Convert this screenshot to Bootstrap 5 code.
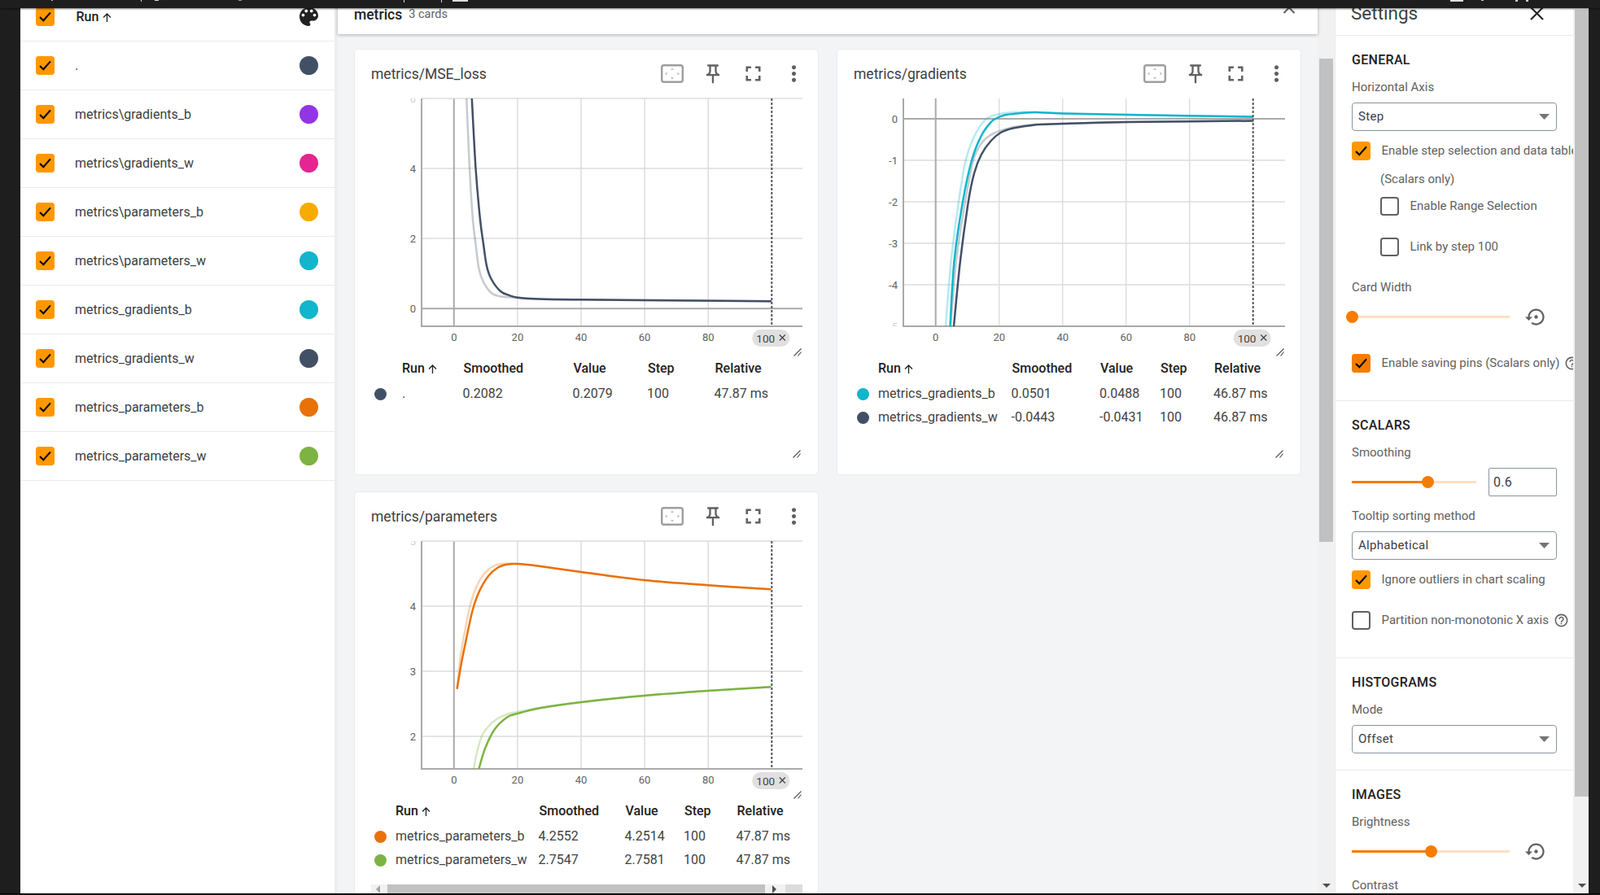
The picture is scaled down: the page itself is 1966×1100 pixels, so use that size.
<!DOCTYPE html>
<html lang="en">
<head>
  <meta charset="UTF-8" />
  <meta name="viewport" content="width=device-width, initial-scale=1.0"/>
  <title>TensorBoard Scalars</title>
  <link href="https://cdn.jsdelivr.net/npm/bootstrap@5.3.0/dist/css/bootstrap.min.css" rel="stylesheet">
  <style>
    html, body { width: 1966px; height: 1100px; overflow: hidden; }
    body { background: #1e1e1e; font-family: Roboto, "Liberation Sans", sans-serif; font-size: 15px; color: #212121; }

    /* window frame */
    .app-wrap { width: 1966px; height: 1099px; overflow: hidden; position: relative; padding: 0 14px 0 25px; }
    .top-strip { position: absolute; left: 0; top: 0; width: 1966px; height: 10px; background: #1e1e1e; box-shadow: 0 1px 2px rgba(0,0,0,.55); z-index: 20; }
    .top-strip svg { display: block; }

    /* run list */
    .runs-pane { width: 386px; flex: none; background: #fff; margin-top: -9px; }
    .run-row { height: 60px; padding: 0 20px 0 19px; border-bottom: 1px solid #ebebeb; }
    .run-row .run-name { margin-left: 25.500px; flex: 1; color: #3c4043; font-size: 16px; }
    .run-row.run-head .run-name { font-weight: 500; color: #212121; margin-left: 27px; }
    .run-row.run-head .up-arrow { margin-left: 5px; }
    .run-dot { width: 23px; height: 23px; border-radius: 50%; flex: none; }
    .pane-gap { width: 4px; flex: none; background: #eee; }
    .up-arrow { fill: none; stroke: currentColor; stroke-width: 1.300; margin-left: 4px; vertical-align: -1px; }

    /* checkboxes */
    .tick { width: 22.5px; height: 22.5px; margin: 0; flex: none; border-radius: 3px; border: 2px solid #616161; background-color: #fff; }
    .form-check-input.tick:checked[type=checkbox] { background-color: #ff9800; border-color: #ff9800; --bs-form-check-bg-image: url("data:image/svg+xml,%3csvg xmlns='http://www.w3.org/2000/svg' viewBox='0 0 22 22'%3e%3cpath fill='none' stroke='%23000' stroke-width='2.400' d='M3.500 11.500l5 5L18.500 5'/%3e%3c/svg%3e"); background-size: 100%; }
    .form-check-input.tick.tick-deep:checked[type=checkbox] { background-color: #f57c00; border-color: #f57c00; }

    /* main column */
    .main-pane { width: 1204px; flex: none; background: #f3f4f6; }
    .group-head { height: 42px; background: #fff; box-shadow: 0 1px 4px rgba(0,0,0,.28); padding: 0 0 6px 20px; position: relative; z-index: 2; }
    .group-head b { font-weight: 500; font-size: 17.5px; }
    .group-head span { font-size: 14.5px; color: #616161; margin-left: 8px; }
    .group-head svg { margin-left: auto; margin-right: 27px; margin-top: -12px; }
    .card-grid { display: grid; grid-template-columns: 571px 571px; gap: 20px 22px; padding: 18px 0 0 20px; }
    .chart-card { height: 524px; border: 1px solid #ebebeb; border-radius: 5px; overflow: hidden; }
    .chart-top { height: 54px; padding: 5px 0 0 20px; }
    .chart-top h6 { margin: 2px 0 0; font-size: 17.500px; font-weight: 400; color: #3c4043; flex: 1; }
    .chart-top .tool { display: block; color: #616161; fill: currentColor; flex: none; }
    .tool.t-fit { margin-right: 22px; }
    .tool.t-pin { margin-right: 19.500px; }
    .tool.t-full { margin-right: 19px; }
    .tool.t-more { margin-right: 14.500px; }
    .chart-body { padding-left: 20px; }
    .chart-svg { display: block; overflow: visible; font-family: Roboto, sans-serif; }
    .grab-mark { position: absolute; right: 21px; bottom: 20px; }

    .val-table { table-layout: fixed; width: 530px; margin: 0; --bs-table-bg: transparent; font-size: 16px; color: #424242; }
    .val-table th, .val-table td { padding: 0; border: 0; white-space: nowrap; vertical-align: middle; }
    .val-table th { height: 32.5px; font-weight: 500; color: #212121; font-size: 16px; }
    .val-table th + th + th { padding-left: 1px; }
    .val-table td { height: 29px; color: #424242; }
    .tbl-dot { display: block; width: 15px; height: 15px; border-radius: 50%; }

    .h-scroll { width: 530px; height: 13px; margin-top: 15px; background: #f1f1f1; }
    .h-scroll .h-thumb { width: 464px; height: 12px; margin-left: 21px; background: #c1c1c1; }
    .h-scroll .h-corner { width: 21px; height: 13px; background: #dcdcdc; margin-left: auto; }
    .h-scroll .h-arrow-l { width: 0; height: 0; margin-left: 6px; margin-right: -12px; border: 5px solid transparent; border-right-color: #a3a3a3; border-left: 0; }
    .h-scroll .h-arrow-r { width: 0; height: 0; margin-left: 9px; border: 5px solid transparent; border-left-color: #505050; border-right: 0; }

    /* fake scrollbars */
    .v-scroll { flex: none; background: #f1f1f1; }
    .v-scroll.main-bar { width: 21px; padding: 0 2px; }
    .v-scroll.main-bar .v-thumb { margin-top: 72px; height: 594px; background: #c1c1c1; }
    .v-scroll.side-bar { width: 19px; padding-left: 2px; }
    .v-scroll.side-bar .v-thumb { margin-top: 12px; height: 967px; background: #c1c1c1; }
    .v-arrow { margin: auto auto 8px; width: 0; height: 0; border: 5px solid transparent; border-top-color: #505050; border-bottom: 0; }

    /* settings */
    .settings-pane { width: 293px; flex: none; background: #fff; border-left: 1px solid #ebebeb; border-right: 0; overflow: hidden; white-space: nowrap; }
    .settings-top { height: 44px; padding: 0 36px 10px 19px; border-bottom: 1px solid #ebebeb; font-size: 22.5px; color: #3c4043; }
    .set-block { padding: 20px 0 34px 20px; border-bottom: 1px solid #ebebeb; }
    .set-block.tight-end { padding-bottom: 20px; }
    .set-block.last-one { border-bottom: 0; padding-bottom: 0; }
    .set-head { height: 20px; line-height: 20px; font-weight: 500; font-size: 16px; letter-spacing: .3px; color: #212121; }
    .set-lbl { height: 20px; line-height: 20px; margin-top: 13px; color: #616161; font-size: 15px; }
    .set-lbl.lbl-next { margin-top: 14px; }
    .set-lbl.lbl-far { margin-top: 28px; }
    .set-lbl.lbl-end { margin-top: 19px; }
    .set-select { width: 252px; height: 35px; margin-top: 9px; padding: 0 24px 0 7px; font-size: 15px; letter-spacing: .3px; color: #3c4043; border: 1px solid #8a94a0; border-radius: 4px; background-size: 13px 7px; background-position: right 8px center; box-shadow: none;
      --bs-form-select-bg-img: url("data:image/svg+xml,%3csvg xmlns='http://www.w3.org/2000/svg' viewBox='0 0 13 7'%3e%3cpath fill='%23757575' d='M0 0h13L6.500 7z'/%3e%3c/svg%3e"); }
    .set-check { height: 23px; margin-top: 13px; color: #616161; }
    .set-check.row-far { margin-top: 27px; }
    .set-check.row-farther { margin-top: 33px; }
    .set-check label { margin-left: 14px; }
    .set-note { height: 20px; line-height: 20px; margin-top: 13px; margin-left: 35px; color: #616161; }
    .set-sub { margin-left: 35px; }
    .set-sub.first-sub { margin-top: 12px; }
    .help-mark { flex: none; margin-left: 6px; fill: #616161; }

    .slide-wrap { height: 26px; margin-top: 13px; }
    .slide-wrap.slim { height: 35px; margin-top: 9px; }
    .slide-rail { position: relative; height: 3px; background: #ffdfc2; flex: none; }
    .slide-fill { height: 3px; background: #f57c00; }
    .slide-knob { position: absolute; top: -6px; width: 15px; height: 15px; margin-left: -7.5px; border-radius: 50%; background: #f57c00; }
    .reset-mark { fill: #616161; margin-left: 19px; flex: none; }
    .set-num { width: 84px; height: 35px; margin-left: 15px; padding: 0 5px; border: 1px solid #8a94a0; border-radius: 2px; font-size: 16px; letter-spacing: .3px; color: #3c4043; box-shadow: none; }

    .edge-line { position: absolute; left: 0; right: 0; bottom: 0; height: 1px; background: #000; }
  </style>
</head>
<body>
  <svg width="0" height="0" class="position-absolute">
    <symbol id="i-fit" viewBox="0 0 28 23">
      <rect x="1.200" y="1.200" width="25.600" height="20.600" rx="2.500" fill="#fff" stroke="#9e9e9e" stroke-width="2.400"/>
      <path fill="#bdbdbd" d="M14 4.500l2 2.500h-4zM14 18.500l2-2.500h-4zM5 11.500l2.500-2v4zM23 11.500l-2.500-2v4z"/>
    </symbol>
    <symbol id="i-pin" viewBox="0 0 24 24">
      <path d="M14 4v5c0 1.120.37 2.160 1 3H9c.65-.86 1-1.900 1-3V4h4m3-2H7c-.55 0-1 .45-1 1s.45 1 1 1h1v5c0 1.660-1.340 3-3 3v2h5.970v7l1 1 1-1v-7H19v-2c-1.660 0-3-1.340-3-3V4h1c.55 0 1-.45 1-1s-.45-1-1-1z"/>
    </symbol>
    <symbol id="i-full" viewBox="0 0 24 24">
      <path d="M7 14H5v5h5v-2H7v-3zm-2-4h2V7h3V5H5v5zm12 7h-3v2h5v-5h-2v3zM14 5v2h3v3h2V5h-5z"/>
    </symbol>
    <symbol id="i-more" viewBox="0 0 24 24">
      <path d="M12 8c1.100 0 2-.9 2-2s-.9-2-2-2-2 .9-2 2 .9 2 2 2zm0 2c-1.100 0-2 .9-2 2s.9 2 2 2 2-.9 2-2-.9-2-2-2zm0 6c-1.100 0-2 .9-2 2s.9 2 2 2 2-.9 2-2-.9-2-2-2z"/>
    </symbol>
    <symbol id="i-help" viewBox="0 0 24 24">
      <path d="M11 18h2v-2h-2v2zm1-16C6.480 2 2 6.480 2 12s4.480 10 10 10 10-4.480 10-10S17.520 2 12 2zm0 18c-4.410 0-8-3.590-8-8s3.590-8 8-8 8 3.590 8 8-3.590 8-8 8zm0-14c-2.210 0-4 1.790-4 4h2c0-1.100.9-2 2-2s2 .9 2 2c0 2-3 1.750-3 5h2c0-2.250 3-2.500 3-5 0-2.210-1.790-4-4-4z"/>
    </symbol>
    <symbol id="i-reset" viewBox="0 0 24 24">
      <path d="M14 12c0-1.100-.9-2-2-2s-2 .9-2 2 .9 2 2 2 2-.9 2-2zm-2-9c-4.970 0-9 4.030-9 9H0l4 4 4-4H5c0-3.870 3.130-7 7-7s7 3.130 7 7-3.130 7-7 7c-1.510 0-2.910-.49-4.060-1.300l-1.420 1.440C8.040 20.300 9.940 21 12 21c4.970 0 9-4.030 9-9s-4.030-9-9-9z"/>
    </symbol>
    <symbol id="i-grab" viewBox="0 0 10 10">
      <path fill="none" stroke="#555" stroke-width="1.200" d="M.5 9.500l9-9M5.500 9.500l4-5"/>
    </symbol>
    <symbol id="i-up" viewBox="0 0 11 11">
      <path d="M5.500 11V1M1 5.500L5.500 1 10 5.500"/>
    </symbol>
  </svg>

  <div class="app-wrap d-flex">
    <!-- Top window strip -->
    <div class="top-strip">
      <svg width="1966" height="3">
        <rect x="63" y="0" width="2" height="1" fill="#bbb"/>
        <rect x="173" y="0" width="1" height="2" fill="#ddd"/>
        <rect x="190" y="0" width="5" height="1" fill="#ddd"/>
        <rect x="293" y="0" width="4" height="1" fill="#999"/>
        <rect x="496" y="0" width="1" height="3" fill="#ddd"/>
        <rect x="542" y="0" width="1" height="3" fill="#ddd"/>
        <rect x="556" y="0" width="19" height="2" fill="#ddd"/>
        <rect x="1782" y="0" width="16" height="2" fill="#ddd"/>
        <rect x="1820" y="0" width="3" height="1" fill="#ccc"/>
        <rect x="1862" y="0" width="3" height="2" fill="#ccc"/>
        <rect x="1875" y="0" width="3" height="2" fill="#ccc"/>
      </svg>
    </div>

    <!-- Runs table -->
    <div class="runs-pane">
      <div class="run-row run-head d-flex align-items-center">
        <input class="form-check-input tick" type="checkbox" checked>
        <span class="run-name">Run<svg class="up-arrow" width="11" height="11"><use href="#i-up"/></svg></span>
        <svg width="23" height="23" viewBox="3 3 18 18"><path fill="#212121" d="M12 3c-4.970 0-9 4.030-9 9s4.030 9 9 9c.83 0 1.500-.67 1.500-1.500 0-.39-.15-.74-.39-1.010-.23-.26-.38-.61-.38-.99 0-.83.67-1.500 1.500-1.500H16c2.760 0 5-2.240 5-5 0-4.420-4.030-8-9-8zm-5.500 9c-.83 0-1.500-.67-1.500-1.500S5.670 9 6.500 9 8 9.670 8 10.500 7.330 12 6.500 12zm3-4C8.670 8 8 7.330 8 6.500S8.670 5 9.500 5s1.500.67 1.500 1.500S10.330 8 9.500 8zm5 0c-.83 0-1.500-.67-1.500-1.500S13.670 5 14.500 5s1.500.67 1.500 1.500S15.330 8 14.500 8zm3 4c-.83 0-1.500-.67-1.500-1.500S16.670 9 17.500 9s1.500.67 1.500 1.500-.67 1.500-1.500 1.500z"/></svg>
      </div>
      <div id="runRows"></div>
    </div>
    <div class="pane-gap"></div>

    <!-- Cards -->
    <div class="main-pane">
      <div class="group-head d-flex align-items-center">
        <b>metrics</b><span>3 cards</span>
        <svg width="16" height="10" viewBox="0 0 16 10"><path fill="none" stroke="#616161" stroke-width="2" d="M1.500 9L8 2.500 14.500 9"/></svg>
      </div>
      <div class="card-grid">
        <div class="card chart-card position-relative">
          <div class="chart-top d-flex align-items-center">
            <h6>metrics/MSE_loss</h6>
            <svg class="tool t-fit" width="28" height="23"><use href="#i-fit"/></svg>
            <svg class="tool t-pin" width="28" height="28"><use href="#i-pin"/></svg>
            <svg class="tool t-full" width="31" height="31"><use href="#i-full"/></svg>
            <svg class="tool t-more" width="31" height="31"><use href="#i-more"/></svg>
          </div>
          <div class="chart-body">
            <svg class="chart-svg" id="chartLoss" width="530" height="322"></svg>
            <table class="table val-table">
              <colgroup><col style="width:38px"><col style="width:74.500px"><col style="width:135px"><col style="width:91.500px"><col style="width:82.500px"><col></colgroup>
              <tr><th></th><th>Run<svg class="up-arrow" width="11" height="11"><use href="#i-up"/></svg></th><th>Smoothed</th><th>Value</th><th>Step</th><th>Relative</th></tr>
              <tr><td><i class="tbl-dot ms-1" style="background:#425066"></i></td><td>.</td><td>0.2082</td><td>0.2079</td><td>100</td><td>47.87 ms</td></tr>
            </table>
          </div>
          <svg class="grab-mark" width="10" height="10"><use href="#i-grab"/></svg>
        </div>

        <div class="card chart-card position-relative">
          <div class="chart-top d-flex align-items-center">
            <h6>metrics/gradients</h6>
            <svg class="tool t-fit" width="28" height="23"><use href="#i-fit"/></svg>
            <svg class="tool t-pin" width="28" height="28"><use href="#i-pin"/></svg>
            <svg class="tool t-full" width="31" height="31"><use href="#i-full"/></svg>
            <svg class="tool t-more" width="31" height="31"><use href="#i-more"/></svg>
          </div>
          <div class="chart-body">
            <svg class="chart-svg" id="chartGrad" width="530" height="322"></svg>
            <table class="table val-table">
              <colgroup><col style="width:30px"><col style="width:163.600px"><col style="width:108.400px"><col style="width:74px"><col style="width:66px"><col></colgroup>
              <tr><th></th><th>Run<svg class="up-arrow" width="11" height="11"><use href="#i-up"/></svg></th><th>Smoothed</th><th>Value</th><th>Step</th><th>Relative</th></tr>
              <tr><td><i class="tbl-dot ms-1" style="background:#12b5cb"></i></td><td>metrics_gradients_b</td><td>0.0501</td><td>0.0488</td><td>100</td><td>46.87 ms</td></tr>
              <tr><td><i class="tbl-dot ms-1" style="background:#425066"></i></td><td>metrics_gradients_w</td><td>-0.0443</td><td>-0.0431</td><td>100</td><td>46.87 ms</td></tr>
            </table>
          </div>
          <svg class="grab-mark" width="10" height="10"><use href="#i-grab"/></svg>
        </div>

        <div class="card chart-card position-relative">
          <div class="chart-top d-flex align-items-center">
            <h6>metrics/parameters</h6>
            <svg class="tool t-fit" width="28" height="23"><use href="#i-fit"/></svg>
            <svg class="tool t-pin" width="28" height="28"><use href="#i-pin"/></svg>
            <svg class="tool t-full" width="31" height="31"><use href="#i-full"/></svg>
            <svg class="tool t-more" width="31" height="31"><use href="#i-more"/></svg>
          </div>
          <div class="chart-body">
            <svg class="chart-svg" id="chartParams" width="530" height="322"></svg>
            <table class="table val-table">
              <colgroup><col style="width:30px"><col style="width:175.500px"><col style="width:106px"><col style="width:72.500px"><col style="width:64.500px"><col></colgroup>
              <tr><th></th><th>Run<svg class="up-arrow" width="11" height="11"><use href="#i-up"/></svg></th><th>Smoothed</th><th>Value</th><th>Step</th><th>Relative</th></tr>
              <tr><td><i class="tbl-dot ms-1" style="background:#e8710a"></i></td><td>metrics_parameters_b</td><td>4.2552</td><td>4.2514</td><td>100</td><td>47.87 ms</td></tr>
              <tr><td><i class="tbl-dot ms-1" style="background:#7cb342"></i></td><td>metrics_parameters_w</td><td>2.7547</td><td>2.7581</td><td>100</td><td>47.87 ms</td></tr>
            </table>
            <div class="h-scroll d-flex align-items-center">
              <div class="h-arrow-l"></div>
              <div class="h-thumb"></div>
              <div class="h-arrow-r"></div>
              <div class="h-corner"></div>
            </div>
          </div>
        </div>
      </div>
    </div>

    <div class="v-scroll main-bar d-flex flex-column">
      <div class="v-thumb"></div>
      <div class="v-arrow"></div>
    </div>

    <!-- Settings -->
    <div class="settings-pane">
      <div class="settings-top d-flex align-items-center justify-content-between">
        <span>Settings</span>
        <svg width="17" height="17" viewBox="0 0 17 17"><path fill="none" stroke="#212121" stroke-width="2" d="M1 1l15 15M16 1L1 16"/></svg>
      </div>

      <div class="set-block">
        <div class="set-head">GENERAL</div>
        <div class="set-lbl">Horizontal Axis</div>
        <select class="form-select set-select"><option>Step</option></select>
        <div class="set-check d-flex align-items-center">
          <input class="form-check-input tick" type="checkbox" checked>
          <label>Enable step selection and data table</label>
        </div>
        <div class="set-note">(Scalars only)</div>
        <div class="set-check set-sub first-sub d-flex align-items-center">
          <input class="form-check-input tick" type="checkbox">
          <label>Enable Range Selection</label>
        </div>
        <div class="set-check set-sub row-far d-flex align-items-center">
          <input class="form-check-input tick" type="checkbox">
          <label>Link by step 100</label>
        </div>
        <div class="set-lbl lbl-far">Card Width</div>
        <div class="slide-wrap d-flex align-items-center">
          <div class="slide-rail" style="width:194px"><div class="slide-knob" style="left:0"></div></div>
          <svg class="reset-mark" width="27" height="27"><use href="#i-reset"/></svg>
        </div>
        <div class="set-check row-farther d-flex align-items-center">
          <input class="form-check-input tick tick-deep" type="checkbox" checked>
          <label>Enable saving pins (Scalars only)</label>
          <svg class="help-mark" width="19" height="19"><use href="#i-help"/></svg>
        </div>
      </div>

      <div class="set-block">
        <div class="set-head">SCALARS</div>
        <div class="set-lbl">Smoothing</div>
        <div class="slide-wrap slim d-flex align-items-center">
          <div class="slide-rail" style="width:153px"><div class="slide-fill" style="width:93px"></div><div class="slide-knob" style="left:93px"></div></div>
          <input class="form-control set-num" type="text" value="0.6">
        </div>
        <div class="set-lbl lbl-next">Tooltip sorting method</div>
        <select class="form-select set-select"><option>Alphabetical</option></select>
        <div class="set-check d-flex align-items-center">
          <input class="form-check-input tick" type="checkbox" checked>
          <label>Ignore outliers in chart scaling</label>
        </div>
        <div class="set-check row-far d-flex align-items-center">
          <input class="form-check-input tick" type="checkbox">
          <label>Partition non-monotonic X axis</label>
          <svg class="help-mark" width="19" height="19"><use href="#i-help"/></svg>
        </div>
      </div>

      <div class="set-block tight-end">
        <div class="set-head">HISTOGRAMS</div>
        <div class="set-lbl">Mode</div>
        <select class="form-select set-select"><option>Offset</option></select>
      </div>

      <div class="set-block last-one">
        <div class="set-head">IMAGES</div>
        <div class="set-lbl">Brightness</div>
        <div class="slide-wrap d-flex align-items-center">
          <div class="slide-rail" style="width:194px"><div class="slide-fill" style="width:97px"></div><div class="slide-knob" style="left:97px"></div></div>
          <svg class="reset-mark" width="27" height="27"><use href="#i-reset"/></svg>
        </div>
        <div class="set-lbl lbl-end">Contrast</div>
      </div>
    </div>

    <div class="v-scroll side-bar d-flex flex-column">
      <div class="v-thumb"></div>
      <div class="v-arrow"></div>
    </div>

    <div class="edge-line"></div>
  </div>

  <script src="https://cdn.jsdelivr.net/npm/bootstrap@5.3.0/dist/js/bootstrap.bundle.min.js"></script>
  <script>
    // Run list on the left
    const runs = [
      [".", "#425066"],
      ["metrics\\gradients_b", "#9334e6"],
      ["metrics\\gradients_w", "#e52592"],
      ["metrics\\parameters_b", "#f9ab00"],
      ["metrics\\parameters_w", "#12b5cb"],
      ["metrics_gradients_b", "#12b5cb"],
      ["metrics_gradients_w", "#425066"],
      ["metrics_parameters_b", "#e8710a"],
      ["metrics_parameters_w", "#7cb342"]
    ];
    document.getElementById("runRows").innerHTML = runs.map(r =>
      `<div class="run-row d-flex align-items-center">
         <input class="form-check-input tick" type="checkbox" checked>
         <span class="run-name">${r[0]}</span>
         <span class="run-dot" style="background:${r[1]}"></span>
       </div>`).join("");

    // Catmull-Rom through the points, so the curves stay smooth
    function curve(pts, ox, oy) {
      const p = pts.map(a => [a[0] - ox, a[1] - oy]);
      let d = `M${p[0][0]} ${p[0][1]}`;
      for (let i = 0; i < p.length - 1; i++) {
        const a = p[i - 1] || p[i], b = p[i], c = p[i + 1], e = p[i + 2] || c;
        const c1x = b[0] + (c[0] - a[0]) / 6, c1y = b[1] + (c[1] - a[1]) / 6;
        const c2x = c[0] - (e[0] - b[0]) / 6, c2y = c[1] - (e[1] - b[1]) / 6;
        d += `C${c1x.toFixed(1)} ${c1y.toFixed(1)} ${c2x.toFixed(1)} ${c2y.toFixed(1)} ${c[0].toFixed(1)} ${c[1].toFixed(1)}`;
      }
      return d;
    }

    function drawChart(id, c) {
      const top = 6, bottom = 286, right = 530;
      const x = v => c.x0 + c.xStep * v;
      let s = `<defs><clipPath id="${id}Clip"><rect x="${c.left - 40}" y="${top}" width="600" height="${bottom - top}"/></clipPath></defs>`;
      // grid
      [20, 40, 60, 80].forEach(v => { s += `<line x1="${x(v)}" x2="${x(v)}" y1="${top}" y2="${bottom}" stroke="#ddd" stroke-width="1.500"/>`; });
      c.ticks.forEach(t => {
        if (t[2]) return;
        s += `<line x1="${c.left}" x2="${right}" y1="${t[1]}" y2="${t[1]}" stroke="${t[0] === "0" ? "#aaa" : "#ddd"}" stroke-width="${t[0] === "0" ? 2 : 1.5}"/>`;
      });
      s += `<line x1="${x(0)}" x2="${x(0)}" y1="${top}" y2="${bottom}" stroke="#aaa" stroke-width="2"/>`;
      if (c.topLine) s += `<line x1="${c.left}" x2="${right}" y1="${top}" y2="${top}" stroke="#ddd" stroke-width="1.500"/>`;
      // axes
      s += `<path d="M${c.left} ${top}V${bottom}H${right}" fill="none" stroke="#aaa" stroke-width="2"/>`;
      // curves
      s += `<g clip-path="url(#${id}Clip)" fill="none" stroke-linejoin="round">`;
      c.lines.forEach(l => {
        s += `<path d="${curve(l.raw, c.ox, c.oy)}" stroke="${l.color}" stroke-opacity=".3" stroke-width="2.500"/>`;
      });
      c.lines.forEach(l => {
        s += `<path d="${curve(l.smooth, c.ox, c.oy)}" stroke="${l.color}" stroke-width="2.500"/>`;
      });
      s += `</g>`;
      // step marker
      s += `<line x1="${x(100)}" x2="${x(100)}" y1="${top}" y2="${bottom}" stroke="#555" stroke-width="2" stroke-dasharray="3 2"/>`;
      // labels, the one at the plot edge is cut in half and faint
      s += `<g clip-path="url(#${id}Clip)" font-size="13" fill="#616161" text-anchor="end" dominant-baseline="central">`;
      c.ticks.forEach(t => { s += `<text x="${c.left - 7}" y="${t[1]}"${t[2] ? ' opacity=".3"' : ""}>${t[0]}</text>`; });
      s += `</g><g font-size="13" fill="#616161" text-anchor="middle" dominant-baseline="central">`;
      [0, 20, 40, 60, 80].forEach(v => { s += `<text x="${x(v)}" y="299">${v}</text>`; });
      s += `</g>`;
      // chip and resize mark
      const cx = x(100) - 24;
      s += `<rect x="${cx}" y="290" width="46" height="21" rx="10.500" fill="#e0e0e0"/>`;
      s += `<text x="${cx + 5}" y="300.500" font-size="13.500" fill="#424242" dominant-baseline="central">100</text>`;
      s += `<path d="M${cx + 33.500} 296.500l7 7M${cx + 40.500} 296.500l-7 7" stroke="#424242" stroke-width="1.200"/>`;
      s += `<use href="#i-grab" x="519" y="313" width="10" height="10"/>`;
      document.getElementById(id).innerHTML = s;
    }

    // pts below are in page pixels, as read off the picture
    drawChart("chartLoss", {
      left: 62, x0: 101.8, xStep: 3.905, ox: 456, oy: 115, topLine: true,
      ticks: [["0", 264.3], ["2", 178], ["4", 92], ["6", 6, true]],
      lines: [{
        color: "#425066",
        raw: [[573, 115], [577, 207], [581, 270], [584.5, 300], [588.4, 330], [594, 346.7], [603.7, 360], [615, 364.3], [636, 366], [657, 367.3], [714, 368.3], [948, 370.3]],
        smooth: [[579.5, 115], [584.5, 207], [590, 270], [594, 300], [598, 326.7], [603.7, 343], [615, 358], [626.7, 363.3], [636, 365.7], [657, 367.3], [714, 368.3], [948, 370.3]]
      }]
    });
    drawChart("chartGrad", {
      left: 61, x0: 100.7, xStep: 3.9, ox: 1049, oy: 115,
      ticks: [["0", 31], ["-1", 82], ["-2", 133], ["-3", 184], ["-4", 235], ["-5", 286, true]],
      lines: [{
        color: "#12b5cb",
        raw: [[1162, 401], [1168.7, 320], [1178, 248], [1186, 200], [1196, 170], [1209.8, 148], [1221.7, 141.7], [1241, 138.3], [1273, 138], [1306, 139.5], [1384, 141], [1540, 143.5]],
        smooth: [[1167.5, 401], [1172.6, 320], [1183, 248], [1194, 197], [1205.8, 166.7], [1217.7, 150], [1225, 145], [1233.5, 141.7], [1245, 140], [1257, 138.7], [1273, 138], [1306, 139.5], [1384, 141], [1540, 143.5]]
      }, {
        color: "#425066",
        raw: [[1168, 401], [1175, 320], [1186, 248], [1196, 197], [1206, 176], [1217, 166], [1229.6, 160.5], [1249, 155.5], [1277, 152.5], [1306, 152], [1384, 150], [1540, 148.5]],
        smooth: [[1172, 401], [1180, 320], [1190, 247], [1197, 213], [1205.8, 190], [1217.7, 173], [1229.6, 163], [1245, 157.5], [1273, 153.3], [1306, 152], [1384, 150], [1540, 148.5]]
      }]
    });
    drawChart("chartParams", {
      left: 62, x0: 101.8, xStep: 3.905, ox: 456, oy: 659, topLine: true,
      ticks: [["2", 246], ["3", 166], ["4", 86], ["5", 6, true]],
      lines: [{
        color: "#e8710a",
        raw: [[561.6, 846.7], [565.4, 810], [571, 776.7], [578.8, 740], [588.4, 715], [600, 700], [611.4, 694], [622.8, 692.5], [635.8, 693], [657, 695], [714, 703], [791.6, 713], [869.7, 719.3], [947.4, 724.3]],
        smooth: [[561.6, 846.7], [567.3, 813], [573, 785], [580.7, 750], [588.4, 728], [600, 708], [611.4, 697.7], [622.8, 693.7], [635.8, 693], [657, 695], [714, 703], [791.6, 713], [869.7, 719.3], [947.4, 724.3]]
      }, {
        color: "#7cb342",
        raw: [[582, 945], [586, 925], [592, 905], [600, 893], [610, 884], [622.8, 878], [635.8, 875], [665, 869.5], [714, 863], [791.6, 855], [869.7, 849], [947.4, 844.3]],
        smooth: [[588.4, 945], [596, 920], [607.5, 896.7], [622.8, 881.7], [635.8, 877], [665, 870], [714, 863], [791.6, 855], [869.7, 849], [947.4, 844.3]]
      }]
    });
  </script>
</body>
</html>
